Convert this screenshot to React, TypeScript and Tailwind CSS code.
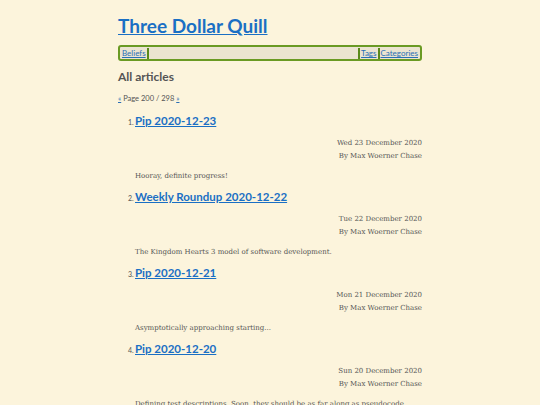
import React from "react";

const items = [
  { n: 1, title: "Pip 2020-12-23", date: "Wed 23 December 2020", summary: "Hooray, definite progress!" },
  { n: 2, title: "Weekly Roundup 2020-12-22", date: "Tue 22 December 2020", summary: "The Kingdom Hearts 3 model of software development." },
  { n: 3, title: "Pip 2020-12-21", date: "Mon 21 December 2020", summary: "Asymptotically approaching starting..." },
  { n: 4, title: "Pip 2020-12-20", date: "Sun 20 December 2020", summary: "Defining test descriptions. Soon, they should be as far along as pseudocode." },
];

const head = { fontFamily: "Lato, 'Open Sans', sans-serif" };
const body = { fontFamily: "'DejaVu Serif', 'Liberation Serif', serif" };

export default function App() {
  return (
    <div className="h-[405px] w-[540px] overflow-hidden bg-[#fcf4dc]">
      <div className="mx-auto w-[304px] pt-[15px]">
        <h1 className="text-[19px] font-bold leading-[22px] text-[#1a6fc4] underline" style={head}>
          Three Dollar Quill
        </h1>
        <nav
          className="mt-[8px] flex h-[16px] items-center rounded-[3px] border-2 border-[#6a9a23] bg-[#ebe4d0] px-[2px] text-[8px] leading-[10px]"
          style={head}
        >
          <a className="text-[#2a6fb5] underline">Beliefs</a>
          <span className="mx-[1px] h-[11px] w-[2px] bg-[#5a8a1a]" />
          <span className="flex-1" />
          <span className="mx-[1px] h-[11px] w-[2px] bg-[#5a8a1a]" />
          <a className="text-[#2a6fb5] underline">Tags</a>
          <span className="mx-[1px] h-[11px] w-[2px] bg-[#5a8a1a]" />
          <a className="text-[#2a6fb5] underline">Categories</a>
        </nav>
        <h2 className="mt-[8px] text-[12px] font-bold leading-[16px] text-[#555]" style={head}>
          All articles
        </h2>
        <div className="mt-[9px] text-[7.5px] leading-[10px] text-[#555]" style={head}>
          <a className="text-[#2a6fb5] underline">«</a> Page 200 / 298{" "}
          <a className="text-[#2a6fb5] underline">»</a>
        </div>
        <ol className="mt-[8px] pl-[17px]">
          {items.map((it) => (
            <li key={it.n} className="mb-[6px]">
              <div className="flex items-baseline">
                <span className="ml-[-7px] w-[7px] text-[7px] text-[#555]" style={head}>
                  {it.n}.
                </span>
                <a className="text-[11.5px] font-bold leading-[18px] text-[#1a6fc4] underline" style={head}>
                  {it.title}
                </a>
              </div>
              <div className="mt-[7px] text-right text-[7px] leading-[13px] text-[#555]" style={body}>
                <div>{it.date}</div>
                <div>By Max Woerner Chase</div>
              </div>
              <p className="mt-[7px] text-[7px] leading-[12px] text-[#555] whitespace-nowrap" style={body}>
                {it.summary}
              </p>
            </li>
          ))}
        </ol>
      </div>
    </div>
  );
}
